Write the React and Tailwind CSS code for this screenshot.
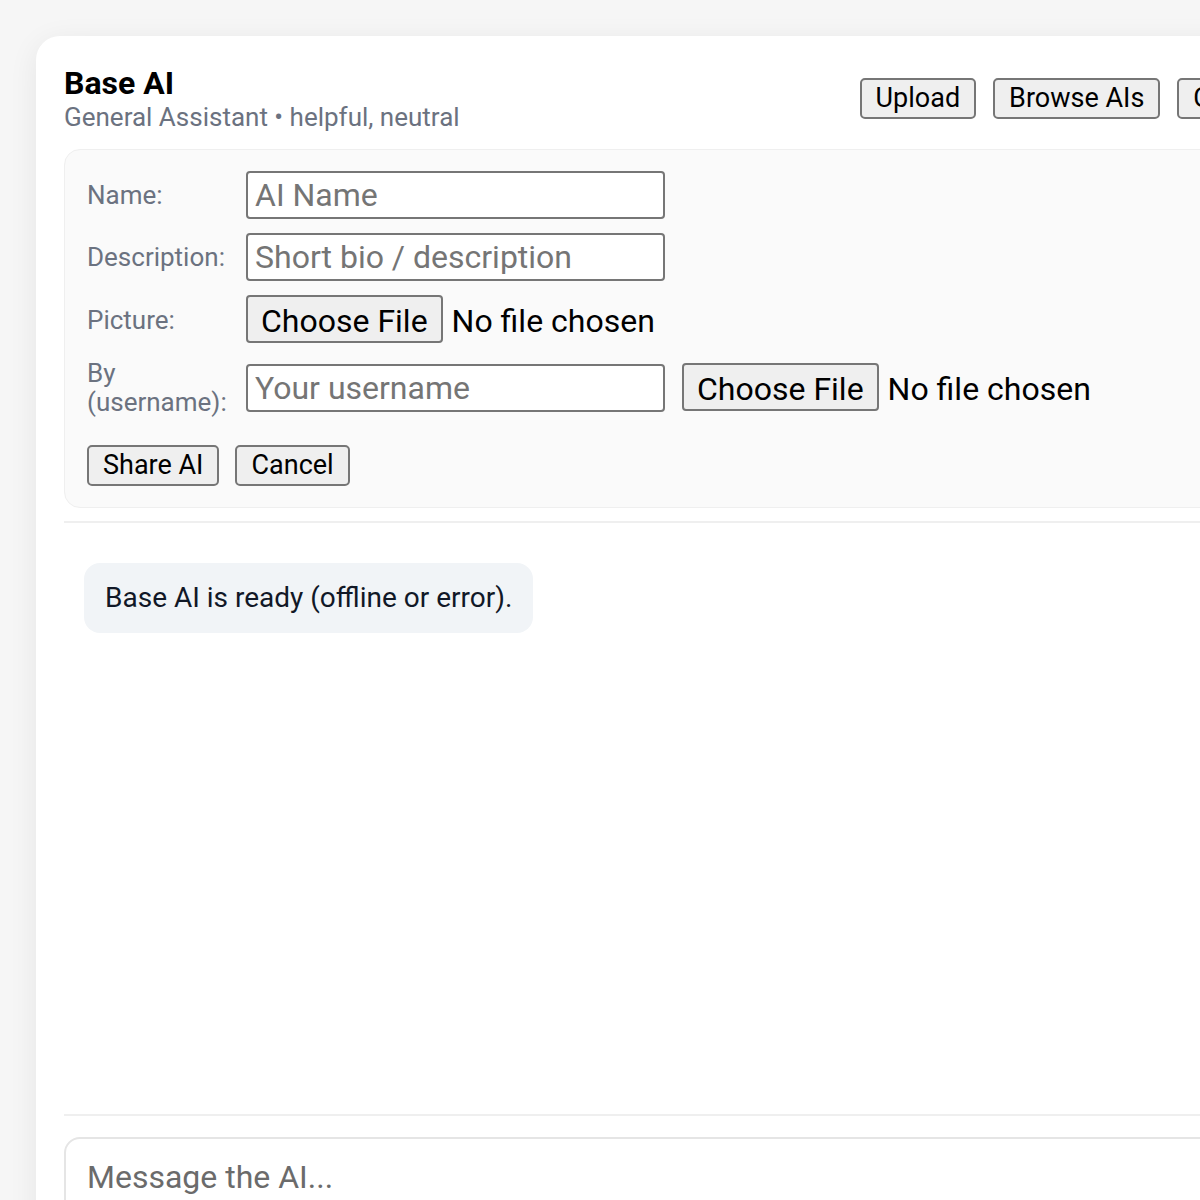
import { useState } from "react";

const btn =
  "h-[41px] px-[14px] bg-[#efefef] border-2 border-[#767676] rounded-[5px] text-[27px] text-black leading-none";

const fileInput =
  "shrink-0 text-[32px] text-black file:h-[48px] file:px-[13px] file:mr-[9px] file:bg-[#efefef] file:border-2 file:border-[#767676] file:rounded-[4px] file:text-black file:text-[32px]";

const textInput =
  "shrink-0 w-[419px] h-[48px] px-[7px] bg-white border-2 border-[#767676] rounded-[4px] text-[32px] text-black placeholder:text-[#757575] outline-none";

function Row({ label, children }) {
  return (
    <div className="flex items-center gap-[9px]">
      <label className="shrink-0 w-[150px] text-[26px] leading-[29px] text-[#6b7280]">{label}</label>
      {children}
    </div>
  );
}

export default function App() {
  const [messages] = useState([{ id: 1, text: "Base AI is ready (offline or error)." }]);

  return (
    <div className="min-h-screen overflow-hidden bg-[#f6f6f6] pt-[36px] pl-[36px]" style={{ fontFamily: "Roboto, 'Noto Sans', sans-serif" }}>
      <div className="w-[1280px] bg-white rounded-[24px] shadow-[0_6px_30px_rgba(0,0,0,0.07)] px-[28px] pt-[28px]">
        {/* header */}
        <div className="flex justify-between items-start">
          <div>
            <h1 className="text-[32px] leading-[38px] font-bold text-black">Base AI</h1>
            <p className="text-[26px] leading-[30px] text-[#6b7280]">General Assistant • helpful, neutral</p>
          </div>
          <div className="flex gap-[17px] mt-[14px]">
            <button className={btn}>Upload</button>
            <button className={btn}>Browse AIs</button>
            <button className={btn}>Create</button>
          </div>
        </div>

        {/* share form */}
        <div className="mt-[17px] bg-[#fafafa] border border-[#efefef] rounded-[16px] px-[22px] pt-[21px] pb-[21px]">
          <div className="flex flex-col gap-[14px]">
            <Row label="Name:">
              <input className={textInput} placeholder="AI Name" />
            </Row>
            <Row label="Description:">
              <input className={textInput} placeholder="Short bio / description" />
            </Row>
            <Row label="Picture:">
              <input type="file" className={fileInput} />
            </Row>
            <Row label="By (username):">
              <input className={textInput} placeholder="Your username" />
              <input type="file" className={`${fileInput} ml-[8px]`} />
            </Row>
          </div>
          <div className="flex gap-[16px] mt-[28px]">
            <button className={`${btn} h-[40px] text-[26px]`}>Share AI</button>
            <button className={`${btn} h-[40px] text-[26px]`}>Cancel</button>
          </div>
        </div>

        <div className="mt-[13px] h-[2px] bg-[#efefef]" />

        {/* messages */}
        <div className="h-[591px] pt-[40px] pl-[20px] flex flex-col items-start gap-3">
          {messages.map((m) => (
            <div key={m.id} className="bg-[#f1f4f7] rounded-[16px] px-[21px] py-[18px] text-[28px] leading-[34px] text-[#111827]">
              {m.text}
            </div>
          ))}
        </div>

        <div className="h-[2px] bg-[#efefef]" />

        {/* composer */}
        <div className="mt-[21px] border-2 border-[#e5e5e5] rounded-[16px] px-[21px] pt-[18px] pb-[20px] h-[120px]">
          <input className="w-full h-[40px] text-[32px] text-black placeholder:text-[#6b6b6b] outline-none bg-transparent" placeholder="Message the AI..." />
        </div>
      </div>
    </div>
  );
}
